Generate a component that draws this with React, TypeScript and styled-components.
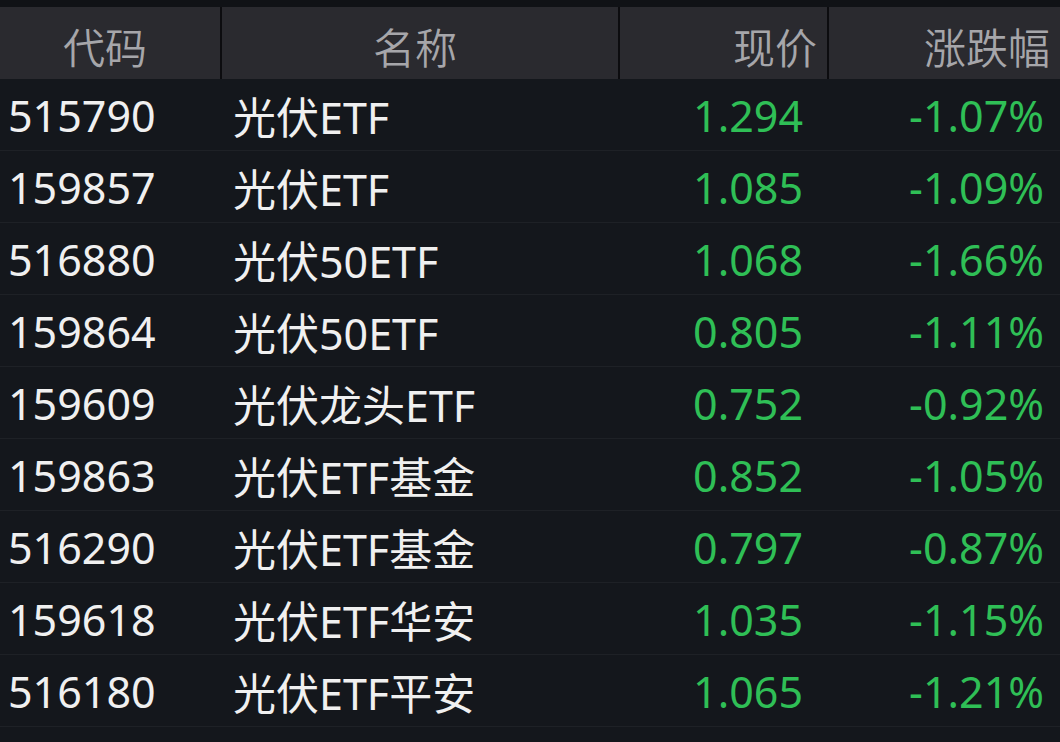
import { Fragment } from 'react';
import styled, { createGlobalStyle } from 'styled-components';

const GlobalStyle = createGlobalStyle`
  html, body {
    margin: 0;
    padding: 0;
    background-color: #14171c;
  }
  body {
    font-family: "Noto Sans", "Noto Sans CJK SC", sans-serif;
  }
`;

const Board = styled.div`
  width: 1060px;
  height: 742px;
  overflow: hidden;
  background-color: #14171c;
  border-top: 7px solid #101216;
  box-sizing: border-box;
`;

const Grid = styled.div`
  display: grid;
  grid-template-columns: 220px 398px 209px 1fr;
`;

const HeadCell = styled.div<{ $align: 'center' | 'right'; $first?: boolean }>`
  height: 72px;
  display: flex;
  align-items: center;
  justify-content: ${(p) => (p.$align === 'center' ? 'center' : 'flex-end')};
  padding: 4px 10px 0 0;
  box-sizing: border-box;
  background-color: #2a2a2f;
  border-left: ${(p) => (p.$first ? 'none' : '2px solid #0c0c0f')};
  color: #a6a6aa;
  font-family: "Noto Sans CJK SC", sans-serif;
  font-size: 42px;
  font-weight: 350;
`;

const Cell = styled.div<{ $align: 'left' | 'right'; $tone: 'white' | 'green' }>`
  height: 72px;
  display: flex;
  align-items: center;
  justify-content: ${(p) => (p.$align === 'right' ? 'flex-end' : 'flex-start')};
  box-sizing: border-box;
  border-bottom: 1px solid #1e2126;
  color: ${(p) => (p.$tone === 'green' ? '#2fbf56' : '#f0f0f0')};
  font-size: 43px;
  font-weight: 400;
  padding-top: 2px;
`;

const CodeCell = styled(Cell)`
  padding-left: 8px;
`;
const NameCell = styled(Cell)`
  padding-left: 13px;
`;
const PriceCell = styled(Cell)`
  padding-right: 24px;
`;
const ChangeCell = styled(Cell)`
  padding-right: 16px;
`;

interface Quote {
  code: string;
  name: string;
  price: string;
  change: string;
}

const quotes: Quote[] = [
  { code: '515790', name: '光伏ETF', price: '1.294', change: '-1.07%' },
  { code: '159857', name: '光伏ETF', price: '1.085', change: '-1.09%' },
  { code: '516880', name: '光伏50ETF', price: '1.068', change: '-1.66%' },
  { code: '159864', name: '光伏50ETF', price: '0.805', change: '-1.11%' },
  { code: '159609', name: '光伏龙头ETF', price: '0.752', change: '-0.92%' },
  { code: '159863', name: '光伏ETF基金', price: '0.852', change: '-1.05%' },
  { code: '516290', name: '光伏ETF基金', price: '0.797', change: '-0.87%' },
  { code: '159618', name: '光伏ETF华安', price: '1.035', change: '-1.15%' },
  { code: '516180', name: '光伏ETF平安', price: '1.065', change: '-1.21%' },
];

function App() {
  return (
    <>
      <GlobalStyle />
      <Board>
        <Grid>
          <HeadCell $align="center" $first>代码</HeadCell>
          <HeadCell $align="center">名称</HeadCell>
          <HeadCell $align="right">现价</HeadCell>
          <HeadCell $align="right">涨跌幅</HeadCell>
          {quotes.map((q) => (
            <Fragment key={q.code}>
              <CodeCell $align="left" $tone="white">{q.code}</CodeCell>
              <NameCell $align="left" $tone="white">{q.name}</NameCell>
              <PriceCell $align="right" $tone="green">{q.price}</PriceCell>
              <ChangeCell $align="right" $tone="green">{q.change}</ChangeCell>
            </Fragment>
          ))}
        </Grid>
      </Board>
    </>
  );
}

export default App;
